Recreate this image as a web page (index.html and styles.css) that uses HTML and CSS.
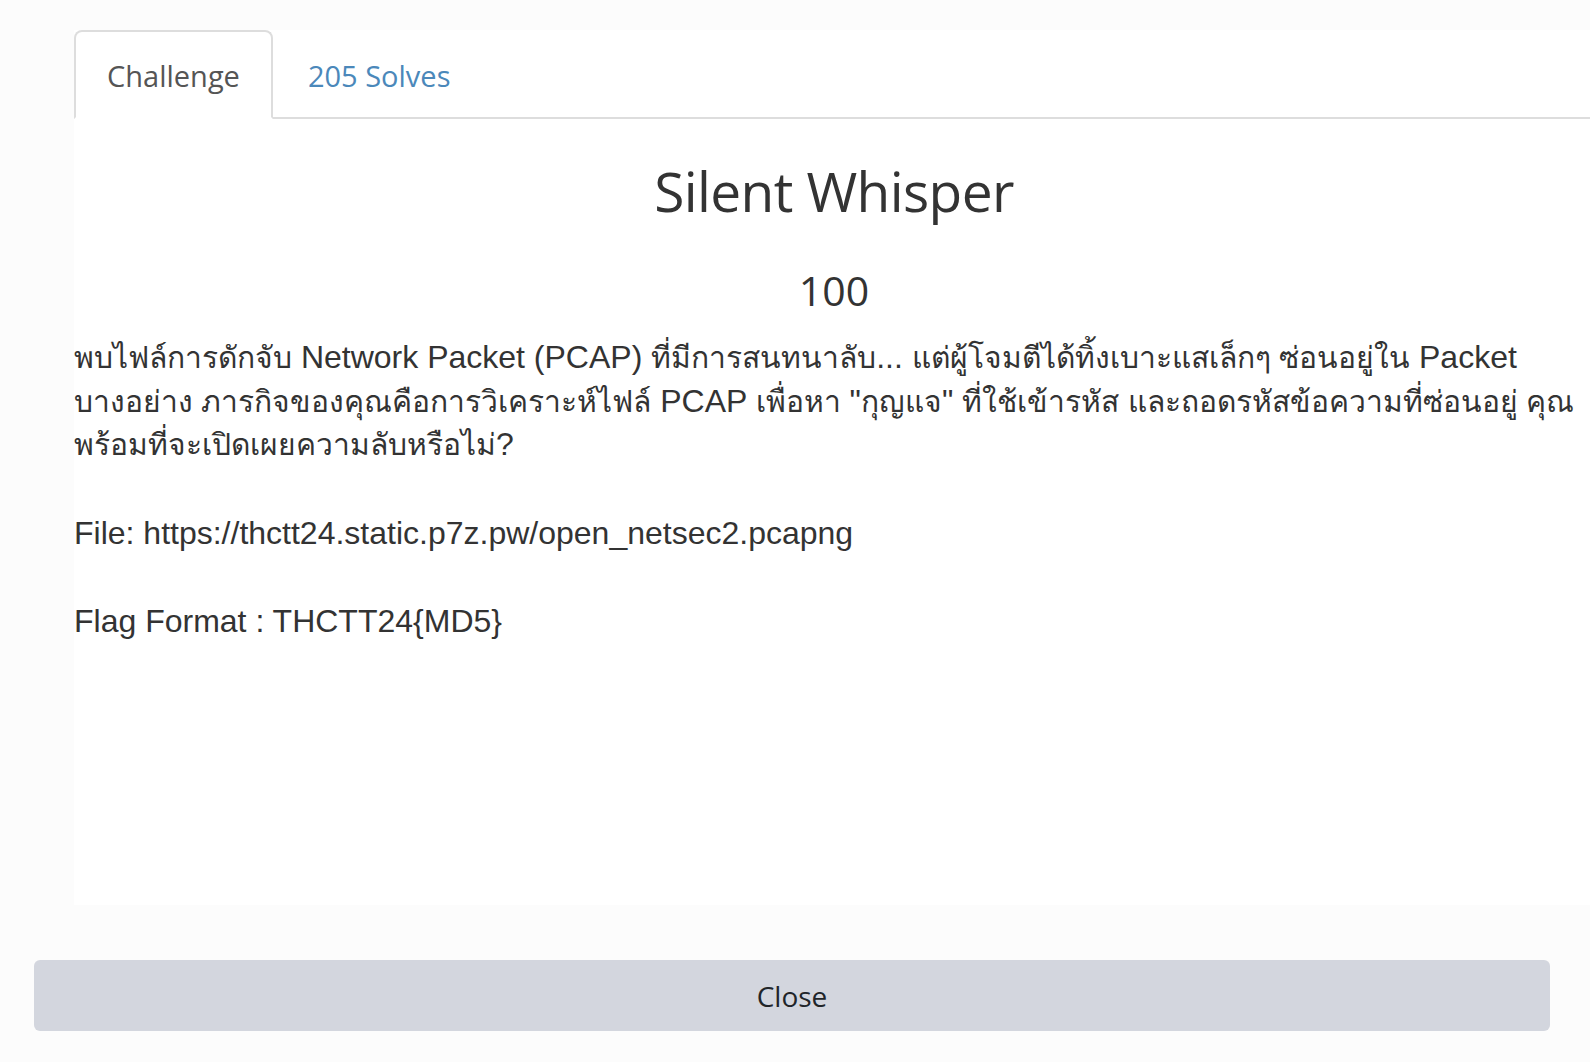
FILE: index.html
```html
<!DOCTYPE html>
<html lang="th">
<head>
<meta charset="utf-8">
<title>Silent Whisper</title>
<link rel="stylesheet" href="styles.css">
</head>
<body>
<div class="modal">
  <div class="modal-body">
    <ul class="nav-tabs">
      <li class="tab active">Challenge</li>
      <li class="tab link">205 Solves</li>
    </ul>
    <div class="challenge">
      <h3 class="title">Silent Whisper</h3>
      <h4 class="value">100</h4>
      <div class="desc">
        <p><span class="th">พบไฟล์การดักจับ</span> Network Packet (PCAP) <span class="th">ที่มีการสนทนาลับ</span>... <span class="th">แต่ผู้โจมตีได้ทิ้งเบาะแสเล็กๆ ซ่อนอยู่ใน</span> Packet<br><span class="th">บางอย่าง ภารกิจของคุณคือการวิเคราะห์ไฟล์</span> PCAP <span class="th">เพื่อหา</span> "<span class="th">กุญแจ</span>" <span class="th">ที่ใช้เข้ารหัส และถอดรหัสข้อความที่ซ่อนอยู่ คุณ</span><br><span class="th">พร้อมที่จะเปิดเผยความลับหรือไม่</span>?</p>
        <p>File: https://thctt24.static.p7z.pw/open_netsec2.pcapng</p>
        <p>Flag Format : THCTT24{MD5}</p>
      </div>
    </div>
  </div>
  <div class="modal-footer">
    <button class="btn-close">Close</button>
  </div>
</div>
</body>
</html>
```

FILE: styles.css
```css
html, body {
  margin: 0;
  padding: 0;
  background: #fcfcfc;
  overflow: hidden;
  width: 1590px;
  height: 1062px;
}

.modal {
  padding-top: 30px;
}

.modal-body {
  margin-left: 74px;
  width: 1520px;
  height: 875px;
  background: #ffffff;
}

.nav-tabs {
  list-style: none;
  margin: 0;
  padding: 0;
  display: flex;
  border-bottom: 2px solid #dddddd;
  height: 87px;
}

.tab {
  font-family: "Open Sans", sans-serif;
  font-size: 29px;
  display: flex;
  align-items: center;
  padding: 2px 31px 0;
  margin-bottom: -2px;
  border: 2px solid transparent;
  border-radius: 8px 8px 0 0;
}

.tab.active {
  color: #555555;
  border-color: #dddddd #dddddd #ffffff;
  background: #ffffff;
}

.tab.link {
  color: #4b88ba;
  padding-left: 33px;
}

.challenge {
  text-align: center;
  color: #333333;
}

.title {
  font-family: "Open Sans", sans-serif;
  font-weight: 400;
  font-size: 55px;
  letter-spacing: -0.6px;
  line-height: 80px;
  margin: 32px 0 0;
}

.value {
  font-family: "Open Sans", sans-serif;
  font-weight: 400;
  font-size: 41px;
  line-height: 60px;
  margin: 29px 0 0;
}

.desc {
  text-align: left;
  font-family: "Liberation Sans", Arial, sans-serif;
  font-size: 32px;
  line-height: 43.6px;
  color: #333333;
  margin-top: 16px;
}

.desc .th {
  font-size: 30px;
}

.desc p {
  margin: 0 0 45px;
  white-space: nowrap;
}

.modal-footer {
  padding: 55px 0 0 34px;
}

.btn-close {
  width: 1516px;
  height: 71px;
  border: none;
  border-radius: 6px;
  background: #d3d6de;
  color: #212529;
  font-family: "Open Sans", sans-serif;
  font-size: 28px;
  padding: 0;
}
```
